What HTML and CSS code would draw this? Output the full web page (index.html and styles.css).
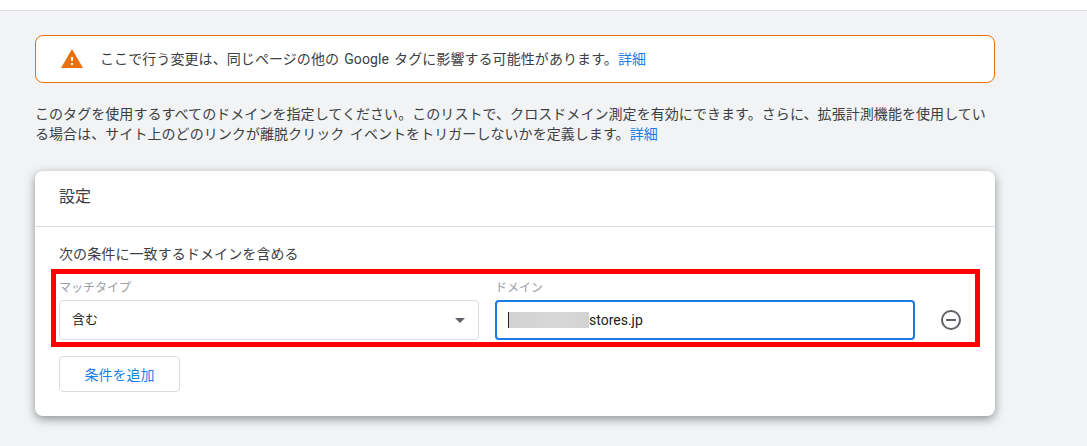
FILE: index.html
```html
<!DOCTYPE html>
<html lang="ja">
<head>
<meta charset="utf-8">
<title>設定</title>
<link rel="stylesheet" href="styles.css">
</head>
<body>
<div class="topbar"></div>
<main class="main">
  <div class="alert">
    <svg class="alert-icon" width="24" height="24" viewBox="0 0 24 24"><path d="M1 21h22L12 2 1 21zm12-3h-2v-2h2v2zm0-4h-2v-4h2v4z" fill="#e8710a"/></svg>
    <p class="alert-text">ここで行う変更は、同じページの他の Google タグに影響する可能性があります。<a class="link">詳細</a></p>
  </div>
  <p class="desc">このタグを使用するすべてのドメインを指定してください。このリストで、クロスドメイン測定を有効にできます。さらに、拡張計測機能を使用している場合は、サイト上のどのリンクが離脱クリック イベントをトリガーしないかを定義します。<a class="link">詳細</a></p>
  <section class="card">
    <h2 class="card-title">設定</h2>
    <div class="card-body">
      <div class="cond-title">次の条件に一致するドメインを含める</div>
      <div class="highlight">
        <div class="field">
          <label class="field-label">マッチタイプ</label>
          <div class="select"><span class="select-value">含む</span><span class="caret"></span></div>
        </div>
        <div class="field">
          <label class="field-label">ドメイン</label>
          <div class="input"><span class="cursor"></span><span class="blur"></span><span>stores.jp</span></div>
        </div>
        <svg class="remove" width="24" height="24" viewBox="0 0 24 24"><circle cx="12" cy="12" r="9" fill="none" stroke="#5f6368" stroke-width="2"/><rect x="7" y="11" width="10" height="2" fill="#5f6368"/></svg>
      </div>
      <button class="add-btn">条件を追加</button>
    </div>
  </section>
</main>
</body>
</html>
```
FILE: styles.css
```css
* { box-sizing: border-box; }
html, body { margin: 0; height: 100%; }
body {
  background: #f1f3f4;
  font-family: Roboto, "Noto Sans CJK JP", sans-serif;
  font-size: 14px;
  color: #3c4043;
  overflow: hidden;
}
.topbar { height: 11px; background: #fff; border-bottom: 1px solid #dadce0; }
.main { width: 960px; margin-left: 35px; padding-top: 24px; }
.alert {
  display: flex;
  align-items: center;
  height: 48px;
  background: #fff;
  border: 1px solid #e8710a;
  border-radius: 8px;
  padding-left: 24px;
}
.alert-icon { flex: none; }
.alert-text { margin: 0 0 0 16px; line-height: 20px; letter-spacing: .08px; word-spacing: 1.6px; }
.link { color: #1a7fe8; }
.desc { margin: 21px 0 0; line-height: 20px; letter-spacing: .06px; word-spacing: 2px; }
.card {
  margin-top: 27px;
  height: 245px;
  background: #fff;
  border-radius: 8px;
  box-shadow: 0 3px 10px rgba(60, 64, 67, .55);
}
.card-title {
  margin: 0;
  height: 56px;
  padding: 0 24px;
  border-bottom: 1px solid #dadce0;
  font-size: 16px;
  font-weight: 400;
  line-height: 52px;
}
.card-body { padding: 17px 24px 0; }
.cond-title { line-height: 20px; height: 20px; letter-spacing: .1px; }
.highlight {
  display: flex;
  align-items: flex-start;
  width: 929px;
  height: 78px;
  margin: 5px 0 9px -8px;
  padding: 6px 3px 0 3px;
  border: 5px solid #f00;
}
.field { width: 420px; margin-right: 16px; }
.field-label { display: block; height: 20px; font-size: 12px; line-height: 16px; color: #9aa0a6; }
.select, .input {
  display: flex;
  align-items: center;
  height: 40px;
  border-radius: 4px;
  color: #202124;
}
.select { justify-content: space-between; border: 1px solid #dadce0; padding: 0 13px 0 12px; }
.select-value { font-size: 13px; line-height: 36px; }
.caret { width: 0; height: 0; border-left: 5px solid transparent; border-right: 5px solid transparent; border-top: 5px solid #5f6368; }
.input { border: 2px solid #1a7ae8; padding-left: 11px; }
.cursor { width: 1px; height: 16px; background: #202124; }
.blur { width: 80px; height: 16px; background: linear-gradient(90deg, #d2d2d2, #d8d8d8 60%, #d2d2d2); }
.remove { flex: none; margin: 28px 0 0 8px; }
.add-btn {
  display: block;
  width: 121px;
  height: 36px;
  padding: 0;
  background: #fff;
  border: 1px solid #dadce0;
  border-radius: 4px;
  font: inherit;
  color: #1a7fe8;
}
```
